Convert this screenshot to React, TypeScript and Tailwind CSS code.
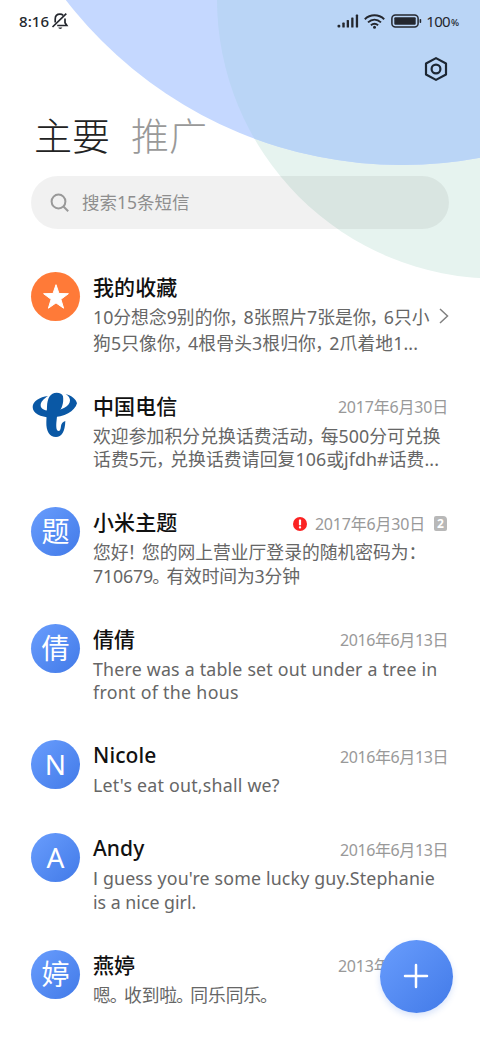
import clsx from "clsx";

type Line = { text: string; className?: string };

type Thread = {
  name: string;
  avatar: string;
  date?: string;
  failed?: boolean;
  sim?: number;
  lines: Line[];
};

const threads: Thread[] = [
  {
    name: "我的收藏",
    avatar: "star",
    lines: [
      { text: "10分想念9别的你，8张照片7张是你，6只小" },
      { text: "狗5只像你，4根骨头3根归你，2爪着地1...", className: "tracking-[0.1px]" },
    ],
  },
  {
    name: "中国电信",
    avatar: "telecom",
    date: "2017年6月30日",
    lines: [
      { text: "欢迎参加积分兑换话费活动，每500分可兑换", className: "tracking-[0.08px]" },
      { text: "话费5元，兑换话费请回复106或jfdh#话费...", className: "tracking-[0.1px]" },
    ],
  },
  {
    name: "小米主题",
    avatar: "题",
    date: "2017年6月30日",
    failed: true,
    sim: 2,
    lines: [
      { text: "您好！您的网上营业厅登录的随机密码为：" },
      { text: "710679。有效时间为3分钟", className: "tracking-[-0.15px]" },
    ],
  },
  {
    name: "倩倩",
    avatar: "倩",
    date: "2016年6月13日",
    lines: [
      { text: "There was a table set out under a tree in", className: "tracking-[0.2px]" },
      { text: "front of the hous", className: "tracking-[0.3px]" },
    ],
  },
  {
    name: "Nicole",
    avatar: "N",
    date: "2016年6月13日",
    lines: [{ text: "Let's eat out,shall we?", className: "tracking-[0.22px]" }],
  },
  {
    name: "Andy",
    avatar: "A",
    date: "2016年6月13日",
    lines: [
      { text: "I guess you're some lucky guy.Stephanie", className: "tracking-[0.16px]" },
      { text: "is a nice girl." },
    ],
  },
  {
    name: "燕婷",
    avatar: "婷",
    date: "2013年6月13日",
    lines: [{ text: "嗯。收到啦。同乐同乐。", className: "tracking-[-0.1px]" }],
  },
];

const Backdrop = () => (
  <svg className="pointer-events-none absolute left-0 top-0" width="480" height="290" viewBox="0 0 480 290">
    <defs>
      <clipPath id="blue-disc">
        <circle cx="401.5" cy="-259" r="424" />
      </clipPath>
    </defs>
    <circle cx="496.5" cy="-1" r="279.5" fill="#e6f3ef" />
    <circle cx="401.5" cy="-259" r="424" fill="#c5d8ff" />
    <circle cx="496.5" cy="-1" r="279.5" fill="#bad5f6" clipPath="url(#blue-disc)" />
  </svg>
);

const StatusBar = () => (
  <div className="flex h-[42px] items-center justify-between pl-[19px] pr-[21px] text-[#24272e]">
    <div className="flex items-center gap-[2px]">
      <span className="text-[15px] font-medium leading-5 tracking-[0.1px]">8:16</span>
      <svg width="18" height="18" viewBox="0 0 18 18" fill="none" stroke="currentColor" strokeWidth="1.7">
        <path d="M4.2 10.5V7.2C4.2 4 6 2.2 9 2.2c1.3 0 2.4.4 3.2 1.1M14 6.5v4.2l1.8 2.8H6.2" />
        <path d="M15.3 1.6 1.5 15" />
        <path d="M7.3 15.6h4c-.5 1-1.2 1.4-2 1.4s-1.6-.4-2-1.4Z" fill="currentColor" stroke="none" />
      </svg>
    </div>
    <div className="flex items-center">
      <svg width="22" height="14" viewBox="0 0 22 14" fill="currentColor">
        <rect x="0.5" y="10.8" width="2.8" height="2.8" rx="1" />
        <rect x="5.3" y="8.6" width="2.4" height="5" rx="0.6" />
        <rect x="9.7" y="6" width="2.3" height="7.6" rx="0.6" />
        <rect x="14.2" y="3.4" width="2.3" height="10.2" rx="0.6" />
        <rect x="18.8" y="0.6" width="2.3" height="13" rx="0.6" />
      </svg>
      <svg className="ml-[5px]" width="21" height="15" viewBox="0 0 21 15" fill="none" stroke="currentColor" strokeWidth="1.9">
        <path d="M.8 5.2C6.3 0 14.7 0 20.2 5.2" />
        <path d="M4 8.4c3.9-3.5 9.1-3.5 13 0" />
        <path d="M6.9 11.3c2.2-1.9 5-1.9 7.2 0" />
        <circle cx="10.5" cy="13.2" r="1.5" fill="currentColor" stroke="none" />
      </svg>
      <svg className="ml-[6px]" width="31" height="14" viewBox="0 0 31 14">
        <rect x="0.9" y="0.9" width="26.2" height="12.2" rx="3.5" fill="none" stroke="currentColor" strokeWidth="1.5" />
        <rect x="3.3" y="3.3" width="21.4" height="7.4" rx="1" fill="currentColor" />
        <rect x="28.6" y="5" width="1.6" height="4" rx="0.7" fill="currentColor" />
      </svg>
      <span className="ml-[4px] text-[15px] leading-5 tracking-[-0.7px]">100</span>
      <span className="ml-px mt-[3px] text-[9.5px] font-medium leading-4">%</span>
    </div>
  </div>
);

const TelecomLogo = () => (
  <svg className="size-[49px] shrink-0" viewBox="93 393 147 147" fill="#0a58a5">
    <path d="M144 408C119 411 98 424 98 441c0 18 23 31 54 31 42 0 72-18 79-42-3-13-16-23-34-28 9 6 13 12 13 19 0 18-26 32-54 32-21 0-34-5-34-17 0-11 9-19 22-28Z" />
    <path d="M189 409c-2-7-9-11-19-11-19 0-28 16-29 42l-2 46c-1 27 10 45 29 45 17 0 27-16 28-48-7 2-12 7-13 15-1 10-3 15-7 15-6 0-8-9-7-24l3-30c13-9 20-29 17-50Z" />
  </svg>
);

const Avatar = ({ kind }: { kind: string }) => {
  if (kind === "telecom") return <TelecomLogo />;
  if (kind === "star") {
    return (
      <div className="flex size-[49px] shrink-0 items-center justify-center rounded-full bg-[#ff7a38]">
        <svg width="28" height="28" viewBox="0 0 28 28" fill="#fff" stroke="#fff" strokeLinejoin="round">
          <path d="m14 1.7 3 8.8 9.4.2-7.5 5.6 2.7 8.9-7.6-5.3-7.6 5.3 2.7-8.9L1.6 10.7l9.4-.2Z" />
        </svg>
      </div>
    );
  }
  return (
    <div className="flex size-[49px] shrink-0 items-center justify-center rounded-full bg-linear-to-br from-[#699dfd] to-[#427ae8] pb-px text-[28px] leading-none text-white">
      {kind}
    </div>
  );
};

// Full-width punctuation is set tighter than the ideographs around it,
// and a lone "I" takes the plain Lato shape without serifs
const Preview = ({ line }: { line: Line }) => (
  <p className={line.className}>
    {line.text.split(/([，。！]|\bI\b)/).map((part, i) =>
      i % 2 === 1 ? (
        <span key={i} className={part === "I" ? "font-['Lato']" : "ml-[-1px] tracking-[-3.5px]"}>
          {part}
        </span>
      ) : (
        part
      )
    )}
  </p>
);

const ThreadRow = ({ thread }: { thread: Thread }) => {
  const isFavourite = thread.avatar === "star";
  return (
    <li className={clsx("flex gap-[13px]", isFavourite ? "pb-[34.5px]" : "pb-[35.5px]")}>
      <Avatar kind={thread.avatar} />
      <div className="min-w-0 flex-1">
        <div className="flex h-[30px] items-center">
          <span className="flex-1 text-[21px] font-medium leading-[30px] tracking-[0.1px] text-[#111]">
            {thread.name}
          </span>
          <div className="mt-[3px] flex items-center">
            {thread.failed && (
              <span className="mr-[8px] flex size-[14px] items-center justify-center rounded-full bg-[#fb2323]">
                <svg width="4" height="10" viewBox="0 0 4 10" fill="#fff">
                  <rect x="0.9" y="0.5" width="2.2" height="5.8" rx="0.6" />
                  <rect x="0.9" y="7.3" width="2.2" height="2.2" rx="0.8" />
                </svg>
              </span>
            )}
            {thread.date && (
              <span
                className={clsx(
                  "text-[16px] leading-6 text-[#999]",
                  thread.date.startsWith("2016") ? "tracking-[-0.4px]" : "tracking-[-0.2px]"
                )}
              >
                {thread.date}
              </span>
            )}
            {thread.sim && (
              <span className="ml-[9px] mr-px flex h-[15px] w-[13px] items-center justify-center rounded-[2px] rounded-tr-[4px] bg-[#b8b8b8] text-[12px] font-bold leading-none text-white">
                {thread.sim}
              </span>
            )}
          </div>
        </div>
        <div
          className={clsx(
            "whitespace-nowrap text-[17.8px] text-[#666]",
            isFavourite ? "pt-[2px] leading-[26px]" : "pt-[4px] leading-[23.5px]"
          )}
        >
          {thread.lines.map((line) => (
            <Preview key={line.text} line={line} />
          ))}
        </div>
      </div>
    </li>
  );
};

const App = () => (
  <div
    className="relative h-[1040px] w-[480px] overflow-hidden bg-white font-['Noto_Sans','Noto_Sans_CJK_SC',sans-serif]"
    lang="zh-CN"
  >
    <Backdrop />
    <div className="relative">
      <StatusBar />

      {/* Settings */}
      <div className="flex h-[53px] justify-end pr-[32px] pt-[15px]">
        <svg width="24" height="24" viewBox="0 0 24 24" fill="none" stroke="#1d2733" strokeWidth="2.2">
          <path d="M12 1.1 22 6.5v11l-10 5.4L2 17.500v-11Z" strokeLinejoin="round" />
          <circle cx="12" cy="12" r="4.4" />
        </svg>
      </div>

      {/* Tabs */}
      <div className="mb-px flex h-[80px] items-center gap-[21px] pl-[34px] text-[38px] font-light leading-none">
        <span className="text-[#222]">主要</span>
        <span className="text-[#999]">推广</span>
      </div>

      {/* Search */}
      <div className="ml-[31px] flex h-[53px] w-[418px] items-center rounded-full bg-black/[0.055] pl-[19px]">
        <svg width="20" height="20" viewBox="0 0 20 20" fill="none" stroke="#999" strokeWidth="2">
          <circle cx="8.5" cy="8.5" r="6.9" />
          <path d="m13.2 13.2 5 5" />
        </svg>
        <span className="mb-px ml-[12px] text-[17.5px] leading-6 text-[#8e8e8e]">搜索15条短信</span>
      </div>

      <ul className="mt-[43px] pl-[31px] pr-[32px]">
        {threads.map((thread) => (
          <ThreadRow key={thread.name} thread={thread} />
        ))}
      </ul>

      <svg
        className="absolute left-[438px] top-[307px]"
        width="12"
        height="18"
        viewBox="0 0 12 18"
        fill="none"
        stroke="#808080"
        strokeWidth="1.5"
      >
        <path d="m2 2 7.5 7L2 16" />
      </svg>
    </div>

    {/* Compose */}
    <button className="absolute left-[380px] top-[940px] flex size-[72.5px] items-center justify-center rounded-full bg-linear-to-br from-[#699dfd] to-[#427ae8] shadow-[0_3px_6px_rgba(66,122,232,0.2)]">
      <svg width="26" height="26" viewBox="0 0 26 26" fill="none" stroke="#fff" strokeWidth="2.5" strokeLinecap="round">
        <path d="M13 2v22M2 13h22" />
      </svg>
    </button>
  </div>
);

export default App;
